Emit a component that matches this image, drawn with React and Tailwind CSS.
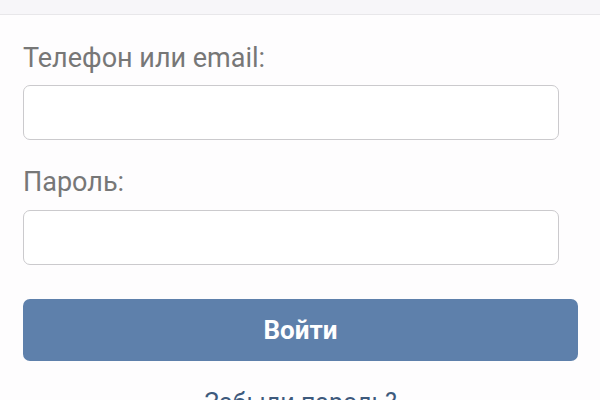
export default function App() {
  return (
    <div className="w-[600px] h-[400px] overflow-hidden bg-[#fefdfe] font-['Roboto',sans-serif]">
      <div className="h-[15px] bg-[#f7f6f9] border-b border-[#e8e7ea]" />

      <div className="pl-[23px] pr-[22px]">
        <label className="block mt-[27px] text-[27px] leading-[32px] text-[#777777]">
          Телефон или email:
        </label>
        <input
          type="text"
          className="block mt-[11px] w-[536px] h-[55px] rounded-[7px] border-[1.5px] border-[#cbcacd] bg-white outline-none"
        />

        <label className="block mt-[26px] text-[27px] leading-[32px] text-[#777777]">
          Пароль:
        </label>
        <input
          type="password"
          className="block mt-[12px] w-[536px] h-[55px] rounded-[7px] border-[1.5px] border-[#cbcacd] bg-white outline-none"
        />

        <button className="mt-[34px] w-[555px] h-[62px] rounded-[7px] bg-[#5e80ab] text-white text-[26px] font-bold">
          Войти
        </button>

        <p className="mt-[26px] text-center text-[25px] leading-[32px] text-[#3e5a7d]">
          Забыли пароль?
        </p>
      </div>
    </div>
  )
}
